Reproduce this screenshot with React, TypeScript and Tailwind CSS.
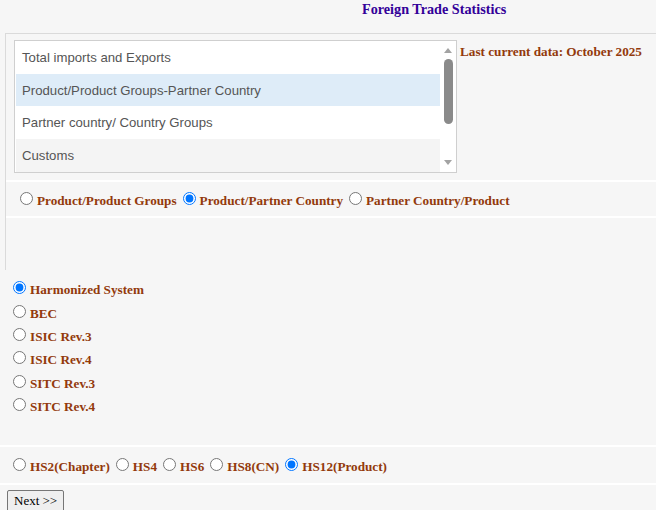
import React from "react";

// ── Radio (native input, classic margins) ─────────────────────────────────────

function Radio({ name, checked }: { name: string; checked?: boolean }) {
  return (
    <input
      type="radio"
      name={name}
      defaultChecked={checked}
      className="m-[3px_4px_0_6px] w-[13px] h-[13px] align-baseline"
    />
  );
}

function Choice({ name, label, checked }: { name: string; label: string; checked?: boolean }) {
  return (
    <label className="whitespace-nowrap">
      <Radio name={name} checked={checked} />
      {label}
    </label>
  );
}

// ── Query type list ───────────────────────────────────────────────────────────

const queryTypes = [
  { label: "Total imports and Exports", bg: "bg-white" },
  { label: "Product/Product Groups-Partner Country", bg: "bg-[#deecf8]" },
  { label: "Partner country/ Country Groups", bg: "bg-white" },
  { label: "Customs", bg: "bg-[#f4f4f4]" },
];

function QueryList() {
  return (
    <div className="flex w-[443px] h-[133px] border border-[#cfcfcf] bg-white">
      <div className="flex flex-col flex-1 pl-px font-['Liberation_Sans',Arial,sans-serif] text-[13.2px] text-[#555]">
        {queryTypes.map((q) => (
          <div key={q.label} className={`h-[32.7px] shrink-0 flex items-center pt-px pl-[6px] ${q.bg}`}>
            {q.label}
          </div>
        ))}
      </div>
      {/* scrollbar */}
      <div className="w-[16px] flex flex-col items-center bg-white">
        <svg width="8" height="5" viewBox="0 0 8 5" className="mt-[7px]">
          <path d="M0 5 L4 0 L8 5 Z" fill="#a3a3a3" />
        </svg>
        <div className="mt-[6px] w-[9px] h-[65px] rounded-full bg-[#8a8a8a]" />
        <div className="flex-1" />
        <svg width="8" height="5" viewBox="0 0 8 5" className="mb-[7px]">
          <path d="M0 0 L8 0 L4 5 Z" fill="#a3a3a3" />
        </svg>
      </div>
    </div>
  );
}

// ── Page ──────────────────────────────────────────────────────────────────────

export default function App() {
  const classifications = [
    "Harmonized System",
    "BEC",
    "ISIC Rev.3",
    "ISIC Rev.4",
    "SITC Rev.3",
    "SITC Rev.4",
  ];

  return (
    <div className="w-[656px] h-[510px] overflow-hidden bg-[#f6f6f6] font-['Liberation_Serif','Times_New_Roman',serif]">
      {/* header */}
      <div className="h-[33px] pt-px pl-[362px] text-[14.2px] leading-[16px] font-bold text-[#330099]">
        Foreign Trade Statistics
      </div>

      {/* query section */}
      <div className="ml-[5px] h-[237px] border-t border-l border-[#dadada]">
        <div className="flex items-start pt-[6px] pl-[8px]">
          <QueryList />
          <div className="ml-[3px] mt-[2px] text-[13.2px] font-bold text-[#933a0c] whitespace-nowrap">
            Last current data: October 2025
          </div>
        </div>

        <div className="mt-[7px] h-[2px] bg-white" />
        <div className="h-[34px] pt-[7px] pl-[8px] text-[13.2px] font-bold text-[#933a0c] whitespace-nowrap">
          <Choice name="view" label="Product/Product Groups" />
          <Choice name="view" label="Product/Partner Country" checked />
          <Choice name="view" label="Partner Country/Product" />
        </div>
        <div className="h-[2px] bg-white" />
      </div>

      {/* classification */}
      <div className="h-[175px] pt-[4px] pl-[7px] text-[13.2px] font-bold text-[#933a0c]">
        {classifications.map((c, i) => (
          <div key={c} className="h-[23.33px] pt-[4.33px]">
            <Choice name="cls" label={c} checked={i === 0} />
          </div>
        ))}
      </div>
      <div className="h-[2px] bg-white" />

      {/* level */}
      <div className="h-[36px] pt-[8px] pl-[7px] text-[13.2px] font-bold text-[#933a0c] whitespace-nowrap">
        <Choice name="lvl" label="HS2(Chapter)" />
        <Choice name="lvl" label="HS4" />
        <Choice name="lvl" label="HS6" />
        <Choice name="lvl" label="HS8(CN)" />
        <Choice name="lvl" label="HS12(Product)" checked />
      </div>
      <div className="h-[2px] bg-white" />

      <div className="pt-[3px] pl-[7px]">
        <button className="h-[22px] px-[6px] border border-[#767676] rounded-[2px] bg-[#efefef] text-[13px] text-black">
          Next &gt;&gt;
        </button>
      </div>
    </div>
  );
}
